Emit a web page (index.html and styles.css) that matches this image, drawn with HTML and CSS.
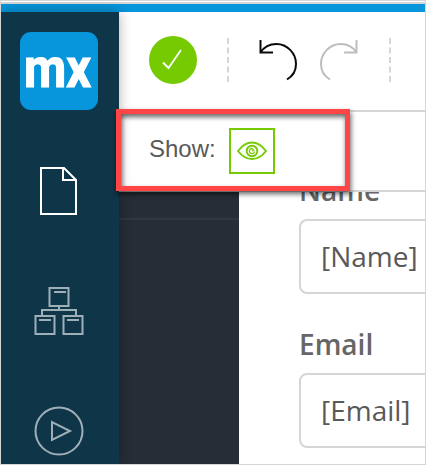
FILE: index.html
```html
<!DOCTYPE html>
<html lang="en">
<head>
<meta charset="utf-8">
<title>Page editor</title>
<link rel="stylesheet" href="styles.css">
</head>
<body>
<div class="window">
  <div class="accent"></div>
  <div class="shell">
    <nav class="sidebar">
      <svg class="logo" width="78" height="78" viewBox="0 0 78 78">
        <rect width="78" height="78" rx="11" fill="#0795db"/>
        <text class="logo-text" x="4" y="54.500" textLength="67" lengthAdjust="spacingAndGlyphs">mx</text>
      </svg>
      <svg class="nav-icon page" width="40" height="50" viewBox="0 0 40 50" fill="none" stroke="#fff" stroke-width="2">
        <path d="M2 2H25L37 14V48H2ZM24 2V14H37"/>
      </svg>
      <svg class="nav-icon model" width="50" height="50" viewBox="0 0 50 50" fill="none" stroke="#9fafb7" stroke-width="2">
        <path d="M15.500 2H34.500V20H15.500ZM20 6H32M25 20V24M8 29V24H42V29M1.500 30H20.500V48H1.500ZM29.500 30H48.500V48H29.500ZM5 34H17M33 34H45"/>
      </svg>
      <svg class="nav-icon run" width="50" height="50" viewBox="0 0 50 50" fill="none" stroke="#9fafb7" stroke-width="2">
        <circle cx="25" cy="25" r="23.500"/><path d="M18 16V34L36 25Z"/>
      </svg>
    </nav>
    <main class="main">
      <header class="toolbar">
        <svg width="48" height="48" viewBox="0 0 48 48" fill="none">
          <circle cx="24" cy="24" r="24" fill="#76ca02"/>
          <path d="M14 26.500L19.500 32L32 14" stroke="#fff" stroke-width="1.800"/>
        </svg>
        <svg class="divider first" width="2" height="44"><path d="M1 0V44" stroke="#d5d5d5" stroke-width="2" stroke-dasharray="6 3.500"/></svg>
        <svg class="undo" width="38" height="42" viewBox="0 0 38 42" fill="none" stroke="#0a0a0a" stroke-width="2">
          <path d="M1.500 1V13.500H14M1.500 13.500C5 8 10 5 17.500 5C28 5 37 14 37 25C37 31 34 37 28 40.500"/>
        </svg>
        <svg class="redo" width="38" height="42" viewBox="0 0 38 42" fill="none" stroke="#bdbdbd" stroke-width="2">
          <path d="M36.500 1V13.500H24M36.500 13.500C33 8 28 5 20.500 5C10 5 1 14 1 25C1 31 4 37 10 40.500"/>
        </svg>
        <svg class="divider last" width="2" height="44"><path d="M1 0V44" stroke="#d5d5d5" stroke-width="2" stroke-dasharray="6 3.500"/></svg>
      </header>
      <section class="showbar">
        <span class="show-label">Show:</span>
        <button class="eye" type="button" aria-label="Visibility">
          <svg width="30" height="20" viewBox="0 0 30 20" fill="none" stroke="#76ca02" stroke-width="1.900">
            <path d="M1 10C5.500 4 10 1.500 15 1.500S24.500 4 29 10C24.500 16 20 18 15 18S5.500 16 1 10Z"/>
            <circle cx="15" cy="10" r="5.300"/><path d="M15.500 7.500A2.600 2.600 0 1 0 17.500 10.500" stroke-width="1.300"/><circle cx="16" cy="9" r="1" stroke-width="1"/>
          </svg>
        </button>
      </section>
      <div class="workspace">
        <aside class="panel"></aside>
        <form class="form">
          <div class="label">Name</div>
          <div class="field">[Name]</div>
          <div class="label">Email</div>
          <div class="field">[Email]</div>
        </form>
      </div>
    </main>
  </div>
  <div class="highlight"></div>
</div>
</body>
</html>
```

FILE: styles.css
```css
* { box-sizing: border-box; }
body { margin: 0; background: #fff; }
.window {
  position: relative;
  display: flex;
  flex-direction: column;
  width: 426px;
  height: 465px;
  overflow: hidden;
  border: 1px solid #d6d6d6;
  background: #fff;
}
.accent {
  flex: none;
  height: 11px;
  border-top: 1px solid #fff;
  background: linear-gradient(#d6d6d6 2px, #0795db 2px);
}
.shell { display: flex; flex: 1; min-height: 0; }
.sidebar {
  z-index: 1;
  display: flex;
  flex: none;
  flex-direction: column;
  align-items: center;
  width: 118px;
  padding: 20px 2px 0 0;
  background: #0f3548;
  box-shadow: 0 0 12px rgba(0, 0, 0, .3);
}
.sidebar svg { flex: none; }
.logo-text {
  fill: #fff;
  stroke: #fff;
  stroke-width: 1.2px;
  font: 700 55px Roboto, sans-serif;
}
.page { margin-top: 56px; }
.model,
.run { margin-top: 70px; }
.main { display: flex; flex: 1; flex-direction: column; min-width: 0; }
.toolbar {
  display: flex;
  flex: none;
  align-items: center;
  height: 100px;
  padding: 0 0 2px 30px;
  border-bottom: 2px solid #d5d5d5;
}
.toolbar svg { flex: none; }
.first { margin-left: 30px; }
.undo { margin: 0 0 1px 30px; }
.redo { margin: 0 0 1px 23px; }
.last { margin-left: 31px; }
.showbar {
  display: flex;
  flex: none;
  align-items: center;
  height: 80px;
  padding-left: 30px;
  border-bottom: 2px solid #d5d5d5;
}
.show-label { margin-bottom: 5px; color: #595959; font: 24px/28px "Liberation Sans", sans-serif; }
.eye {
  display: grid;
  place-items: center;
  width: 46px;
  height: 46px;
  margin: 0 0 0 13px;
  padding: 0;
  border: 2px solid #76ca02;
  background: #fff;
}
.workspace { display: flex; flex: 1; min-height: 0; overflow: hidden; }
.panel {
  flex: none;
  width: 120px;
  background: linear-gradient(#262d37 26px, #303744 26px, #303744 28px, #262d37 28px);
}
.form {
  flex: none;
  width: 220px;
  margin-top: -21px;
  padding-left: 60px;
  font-family: "Open Sans", sans-serif;
}
.label { height: 48px; color: #666; font-size: 28px; font-weight: 600; line-height: 38px; }
.field {
  height: 75px;
  margin-bottom: 31px;
  padding-left: 20px;
  border: 2px solid #d5d5d5;
  border-radius: 8px;
  color: #595959;
  font-size: 28px;
  line-height: 71px;
}
.highlight {
  position: absolute;
  z-index: 2;
  top: 108px;
  left: 115px;
  width: 234px;
  height: 82px;
  border: 5px solid #ff4545;
  box-shadow: 1px 3px 5px rgba(0, 0, 0, .6), inset 1px 3px 5px rgba(0, 0, 0, .6);
}
```
